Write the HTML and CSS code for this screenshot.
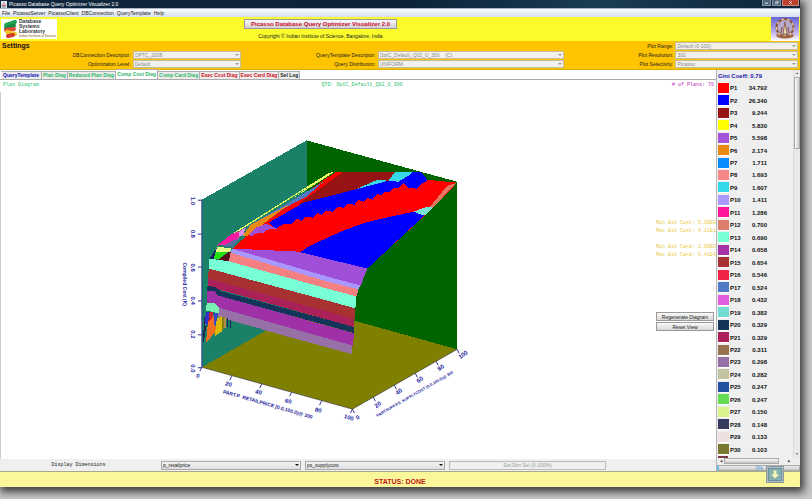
FILE: index.html
```
<!DOCTYPE html>
<html lang="en">
<head>
<meta charset="utf-8">
<title>Picasso Database Query Optimizer Visualizer 2.0</title>
<link rel="stylesheet" href="styles.css">
</head>
<body>
<div class="window">
  <header class="titlebar">
    <svg class="java" viewBox="0 0 6 7"><rect width="6" height="7" fill="#dfe6ee"/><path d="M3 1q-1 1 0 2M1 4h3v1H1zM4 4h1" stroke="#b33" stroke-width=".6" fill="none"/><path d="M1 6h4" stroke="#357" stroke-width=".6"/></svg>
    <span class="title">Picasso Database Query Optimizer Visualizer 2.0</span>
    <div class="controls">
      <button class="ctl" aria-label="Minimize"><svg viewBox="0 0 10 6"><path d="M3 4h4" stroke="#fff" stroke-width="1.3"/></svg></button>
      <button class="ctl" aria-label="Restore"><svg viewBox="0 0 10 6"><path d="M3.500 2.500h3v2h-3zM5 1.500h2.500v2" stroke="#fff" stroke-width=".8" fill="none"/></svg></button>
      <button class="ctl close" aria-label="Close"><svg viewBox="0 0 10 6"><path d="M3.500 1.500l3 3M6.500 1.500l-3 3" stroke="#fff" stroke-width="1"/></svg></button>
    </div>
  </header>
  <nav class="menu">
    <a href="#">File</a><a href="#">PicassoServer</a><a href="#">PicassoClient</a><a href="#">DBConnection</a><a href="#">QueryTemplate</a><a href="#">Help</a>
  </nav>
  <section class="banner">
    <div class="lab">
      <svg viewBox="0 0 16 20"><g stroke-width="4" stroke-linecap="round" fill="none"><path d="M4 6L13 3" stroke="#23a455"/><path d="M4 9L12 6.500" stroke="#158a42"/><path d="M4 11L12 10" stroke="#e04a3a"/><path d="M5 13L13 15" stroke="#f0c820"/><path d="M6 17L11 16" stroke="#d8372d"/></g></svg>
      <p>Database<br>Systems<br>Laboratory<small>Indian Institute of Science</small></p>
    </div>
    <div class="product">
      <button class="product-name">Picasso Database Query Optimizer Visualizer 2.0</button>
      <p>Copyright © Indian Institute of Science, Bangalore, India</p>
    </div>
    <svg class="crest" viewBox="0 0 28 24" preserveAspectRatio="none"><defs><linearGradient id="sky" x2="0" y2="1"><stop stop-color="#6865d8"/><stop offset=".6" stop-color="#b9a8e8"/><stop offset="1" stop-color="#fff"/></linearGradient></defs><rect width="28" height="24" fill="url(#sky)"/><circle cx="14" cy="10.500" r="8.500" fill="#b8aace" stroke="#80503a" stroke-width="2"/><circle cx="14" cy="10.500" r="8.500" fill="none" stroke="#e8c8a0" stroke-width="1.300" stroke-dasharray="3 3"/><path d="M12 17L14 5l2 12z" fill="#f0ddb0" stroke="#805038" stroke-width=".8"/><path d="M10 16l1-6M18 16l-1-6" stroke="#805038"/><path d="M5 17q9 4 18 0l-1 3q-8 3-16 0z" fill="#a0683c"/></svg>
  </section>
  <section class="settings">
    <h2>Settings</h2>
    <label class="l1 r2" for="db">DBConnection Descriptor:</label><span class="combo s1 r2"><select id="db" disabled><option>OPTC_2008</option></select></span>
    <label class="l1 r3" for="opt">Optimization Level:</label><span class="combo s1 r3"><select id="opt" disabled><option>Default</option></select></span>
    <label class="l2 r2" for="qt">QueryTemplate Descriptor:</label><span class="combo s2 r2"><select id="qt" disabled><option>OptC_Default_Q02_U_300 &nbsp;&nbsp; (C)</option></select></span>
    <label class="l2 r3" for="qd">Query Distribution:</label><span class="combo s2 r3"><select id="qd" disabled><option>UNIFORM</option></select></span>
    <label class="l3 r1" for="pr">Plot Range:</label><span class="combo s3 r1"><select id="pr" disabled><option>Default (0-100)</option></select></span>
    <label class="l3 r2" for="res">Plot Resolution:</label><span class="combo s3 r2"><select id="res" disabled><option>300</option></select></span>
    <label class="l3 r3" for="sel">Plot Selectivity:</label><span class="combo s3 r3"><select id="sel" disabled><option>Picasso</option></select></span>
  </section>
  <main class="work">
    <section class="left">
      <div class="tabs" role="tablist">
        <button role="tab" class="blue">QueryTemplate</button><button role="tab" class="green">Plan Diag</button><button role="tab" class="green">Reduced Plan Diag</button><button role="tab" class="green active" aria-selected="true">Comp Cost Diag</button><button role="tab" class="green">Comp Card Diag</button><button role="tab" class="red">Exec Cost Diag</button><button role="tab" class="red">Exec Card Diag</button><button role="tab">Sel Log</button>
      </div>
      <div class="plot-head"><span>Plan Diagram</span><span class="mid">QTD: OptC_Default_Q02_U_300</span><span class="plans"># of Plans: 76</span></div>
      <div class="plot">
        <svg class="diagram" viewBox="0 92 656 368" role="img" aria-label="Compiled cost diagram">
          <g shape-rendering="crispEdges">
          <path fill="#1b8068" d="M201 200L306 140.500V308L201 368z"/>
          <path fill="#006400" d="M306 140.500L457 182V350L306 308z"/>
          <path fill="#808000" d="M201 368L306 308L457 350L352 410z"/>
          <path fill="#f00" d="M232 249L246 236L325 179L336 172H418L427 180L457 183L432 209L367 269L297 254z"/>
          <path fill="#971414" d="M297 205L343 172H395L388 181L377 180L350 192L310 202z"/>
          <path fill="#34d8e8" d="M350 192L377 180L388 181L395 172H418L410 178L398 183z"/>
          <path fill="#00f" d="M268 223L303 203L350 191L388 181L398 182L408 176L413 172H420L426 178L427 181L421 184L417 189L408 188L403 183L398 188L393 188L390 192L384 192L381 196L377 194L372 200L367 198L363 202L358 200L354 205L348 204L343 208L337 207L332 212L326 211L321 215L317 213L312 218L306 217L301 221L296 219L291 224L284 224L275 229z"/>
          <path fill="#00f" d="M297 254L310 246L325 239L345 230L365 223L390 217L414 212L425 215L367 269z"/>
          <path fill="#e37862" d="M457 183L447 186L429 208H433L444 196z"/>
          <path fill="#78e0d5" d="M413 212L427 207L433 208L424 216z"/>
          <path fill="#a050d8" d="M231 249L297 252L367 269L363 279L360 287L330 279z"/>
          <path fill="#e8889a" d="M230 250L240 252V260L230 257z"/>
          <path fill="#a898ff" d="M231 249L330 278L360 286L358 290L330 283L230 255z"/>
          <path fill="#f48082" d="M229 253L330 283L358 290L356 297L330 290L228 262z"/>
          <path fill="#78ffd5" d="M208 259L229 262L330 290L356 297L355 309L330 302L208 269z"/>
          <path fill="#a83232" d="M208 269L330 302L355 309L354 321L330 314L207 280z"/>
          <path fill="#aa215a" d="M207 279L330 313L354 320V328L330 321L207 287z"/>
          <path fill="#15345a" d="M207 286L215 288L221 292L330 321L354 328V334L330 327L217 296L214 292L206 291z"/>
          <path fill="#a030a8" d="M206 291L214 292L217 296L354 334L352 347L330 340L218 310L206 304z"/>
          <path fill="#9770a8" d="M217 308L330 340L352 346V355L330 349L217 318z"/>
          <path fill="#1b8068" d="M218 318L262 330L234 349L201 367L204 345z"/>
          <path fill="#78f0b0" d="M206 303L214 304L218 308V314L205 311z"/>
          <path fill="#3030c8" d="M205 312L209 313L207 326L204 325z"/><path fill="#d82030" d="M209 312L212 313L211 325H207z"/>
          <path fill="#f47020" d="M207 324L214 315L215 332L205 344z"/><path fill="#3848c8" d="M213 314L217 314L215 326H213z"/>
          <path fill="#d8b800" d="M216 319L221 317V332L214 337z"/><path fill="#80801c" d="M221 318H225V326L221 332z"/><path fill="#202060" d="M226 319H227V328H226zM229 321H230V329H229z"/>
          <path fill="#b98b48" d="M223 319H225V329H223z"/><path fill="#90e838" d="M203 325H205L203 343H202z"/><path fill="#1f2a50" d="M204 315L205 330L202 347L203 323z"/>
          <path fill="#e840a0" d="M216 246L230 235L242 229L247 226L238 239L227 245z"/>
          <path fill="#fa18a0" d="M216 246L230 235L240 233L235 240L226 244z"/>
          <path fill="#e090e8" d="M238 233L245 227L243 235L239 237z"/>
          <path fill="#507bc4" d="M244 229L306 197L323 182L286 204L250 225z"/>
          <path fill="#e98812" d="M242 236L250 225L290 204L276 214L253 232L247 236z"/>
          <path fill="#a050d8" d="M248 235L255 228L266 224L272 227L277 229L267 230L263 233L255 234L251 237z"/>
          <path fill="#e8ff60" d="M230 235L327 174L335 171L325 178L245 228z"/>
          <path fill="#20846b" d="M234 234L310 186L286 203L245 228z"/>
          <path fill="#506ea0" d="M222 247L232 241L240 238L232 248z"/>
          <path fill="#dfff80" d="M216 247L231 249L229 253L215 252z"/>
          <path fill="#25e010" d="M215 252L227 253L222 256L219 260L213 259z"/>
          <path fill="#5a1018" d="M227 253L230 252L228 262L218 260z"/>
          <path fill="#182060" d="M216 248L213 259H209z"/>
          </g>
          <g fill="none" stroke="#30308c" stroke-width="1"><path d="M201 200V368M197 200.500H201M197 234.500H201M197 267.500H201M197 301.500H201M197 335.500H201M197 368.500H201"/><path d="M201 368L352 410L457 350" stroke="#505050" stroke-width=".8"/><path d="M201 368L199 372M231 377L229 381M261 385L259 389M291 393L289 397M321 402L319 406M352 410L350 414M352 410L354 414M373 398L375 402M394 386L396 390M415 374L417 378M436 362L438 366M457 350L459 354"/></g>
          <g class="tick">
            <text transform="translate(190 197) rotate(90)">1.0</text><text transform="translate(190 230) rotate(90)">0.8</text><text transform="translate(190 264) rotate(90)">0.6</text><text transform="translate(190 297) rotate(90)">0.4</text><text transform="translate(190 331) rotate(90)">0.2</text><text transform="translate(190 365) rotate(90)">0.0</text>
            <text transform="translate(195 378) rotate(16)">0</text><text transform="translate(224 386) rotate(16)">20</text><text transform="translate(254 394) rotate(16)">40</text><text transform="translate(284 403) rotate(16)">60</text><text transform="translate(314 412) rotate(16)">80</text><text transform="translate(343 419) rotate(16)">100</text>
            <text transform="translate(357 421) rotate(-35)">0</text><text transform="translate(376 409) rotate(-35)">20</text><text transform="translate(397 396) rotate(-35)">40</text><text transform="translate(418 384) rotate(-35)">60</text><text transform="translate(439 372) rotate(-35)">80</text><text transform="translate(460 360) rotate(-35)">100</text>
          </g>
          <g class="axis">
            <text transform="translate(182 263) rotate(90)">Compiled Cost (K)</text>
            <text transform="translate(222 394) rotate(16)">PART.P_RETAILPRICE [0.0,100.0)@ 300</text>
            <text class="small" transform="translate(377 418) rotate(-30)">PARTSUPP.PS_SUPPLYCOST [0.0,100.0)@ 300</text>
          </g>
        </svg>
        <aside class="side">
          <p>Min Est Cost: 5.30E0</p><p>Max Est Cost: 4.11E1</p><p class="card">Min Est Card: 1.00E0</p><p>Max Est Card: 6.41E4</p>
          <div class="actions"><button>Regenerate Diagram</button><button>Reset View</button></div>
        </aside>
      </div>
      <div class="dims">
        <label for="dx">Display Dimensions</label>
        <span class="combo live"><select id="dx"><option>p_retailprice</option></select></span>
        <span class="combo live"><select id="dy" aria-label="Second dimension"><option>ps_supplycost</option></select></span>
        <button disabled>Set Dim Sel (0-100%)</button><span></span>
      </div>
    </section>
    <aside class="legend">
      <div class="legend-body">
        <div class="plans-list">
          <h3>Gini Coeff: 0.79</h3>
          <table><tbody>
          <tr><td><i class="p1"></i></td><th>P1</th><td>34.792</td></tr>
          <tr><td><i class="p2"></i></td><th>P2</th><td>26.340</td></tr>
          <tr><td><i class="p3"></i></td><th>P3</th><td>9.244</td></tr>
          <tr><td><i class="p4"></i></td><th>P4</th><td>5.830</td></tr>
          <tr><td><i class="p5"></i></td><th>P5</th><td>5.598</td></tr>
          <tr><td><i class="p6"></i></td><th>P6</th><td>2.174</td></tr>
          <tr><td><i class="p7"></i></td><th>P7</th><td>1.711</td></tr>
          <tr><td><i class="p8"></i></td><th>P8</th><td>1.693</td></tr>
          <tr><td><i class="p9"></i></td><th>P9</th><td>1.607</td></tr>
          <tr><td><i class="p10"></i></td><th>P10</th><td>1.411</td></tr>
          <tr><td><i class="p11"></i></td><th>P11</th><td>1.286</td></tr>
          <tr><td><i class="p12"></i></td><th>P12</th><td>0.700</td></tr>
          <tr><td><i class="p13"></i></td><th>P13</th><td>0.690</td></tr>
          <tr><td><i class="p14"></i></td><th>P14</th><td>0.658</td></tr>
          <tr><td><i class="p15"></i></td><th>P15</th><td>0.654</td></tr>
          <tr><td><i class="p16"></i></td><th>P16</th><td>0.546</td></tr>
          <tr><td><i class="p17"></i></td><th>P17</th><td>0.524</td></tr>
          <tr><td><i class="p18"></i></td><th>P18</th><td>0.432</td></tr>
          <tr><td><i class="p19"></i></td><th>P19</th><td>0.382</td></tr>
          <tr><td><i class="p20"></i></td><th>P20</th><td>0.329</td></tr>
          <tr><td><i class="p21"></i></td><th>P21</th><td>0.329</td></tr>
          <tr><td><i class="p22"></i></td><th>P22</th><td>0.311</td></tr>
          <tr><td><i class="p23"></i></td><th>P23</th><td>0.298</td></tr>
          <tr><td><i class="p24"></i></td><th>P24</th><td>0.282</td></tr>
          <tr><td><i class="p25"></i></td><th>P25</th><td>0.247</td></tr>
          <tr><td><i class="p26"></i></td><th>P26</th><td>0.247</td></tr>
          <tr><td><i class="p27"></i></td><th>P27</th><td>0.150</td></tr>
          <tr><td><i class="p28"></i></td><th>P28</th><td>0.148</td></tr>
          <tr><td><i class="p29"></i></td><th>P29</th><td>0.133</td></tr>
          <tr><td><i class="p30"></i></td><th>P30</th><td>0.103</td></tr>
          </tbody></table>
          <div class="next"></div>
        </div>
        <div class="vscroll"><b>▲</b><span class="thumb"></span><b>▼</b></div>
      </div>
      <div class="hscroll"><b>◀</b><span class="thumb"></span><b>▶</b><span></span></div>
      <div class="progress">0%</div>
    </aside>
  </main>
  <footer class="status">STATUS: DONE
    <svg class="badge" viewBox="0 0 18 17"><rect x=".5" y=".5" width="17" height="16" fill="#fdfde8" stroke="#909a98"/><rect x="2" y="2" width="14" height="13" fill="#86b0ad" stroke="#54799a"/><path d="M7.500 4.500h3v4h2.500L9 12.500L5 8.500h2.500z" fill="#f6f6b8"/></svg>
  </footer>
</div>
</body>
</html>
```
FILE: styles.css
```
* { box-sizing: border-box; margin: 0; padding: 0; }
body {
  height: 100vh;
  padding: 0 12px 12px 0;
  overflow: hidden;
  background: #c9c9c9;
  font: 5px/6px "Liberation Sans", Arial, sans-serif;
  color: #222;
}
button, select { font: inherit; color: inherit; border: 0; border-radius: 0; background: none; }
a { color: inherit; text-decoration: none; }
svg { display: block; }
.window {
  display: flex;
  flex-direction: column;
  height: 100%;
  box-shadow: 2px 3px 8px 2px #3c3c3c;
}

.titlebar {
  display: flex;
  align-items: center;
  height: 8px;
  flex: none;
  padding: 0 1px 0 1px;
  background: linear-gradient(90deg, #10263d, #0b2238 50%, #1a3c55 75%, #0d2336);
  color: #fff;
}
.java { width: 6px; height: 7px; margin-right: 2px; }
.controls { display: flex; align-self: flex-start; gap: 1px; margin-left: auto; }
.ctl { width: 9px; height: 6px; background: #53677a; border: 1px solid #8797a5; border-top: 0; }
.ctl svg { width: 100%; height: 100%; }
.ctl.close { width: 17px; background: #bd3f2d; border-color: #cf8a80; }

.menu {
  display: flex;
  align-items: center;
  gap: 3px;
  height: 9px;
  flex: none;
  padding-left: 2px;
  border-top: 1px solid #a9b6c6;
  background: linear-gradient(#fbfcfe, #d5ddef);
}

.banner {
  display: grid;
  grid-template-columns: 243fr 153fr 402fr;
  align-items: center;
  height: 24px;
  flex: none;
  padding: 0 1px;
  background: #fbfa2b;
}
.lab { display: flex; width: 56px; height: 20px; background: #fff; font-weight: bold; color: #333; }
.lab svg { width: 18px; height: 20px; flex: none; }
.lab p { line-height: 5px; white-space: nowrap; }
.lab small { display: block; font-size: 3px; line-height: 4px; color: #b08050; }
.product { text-align: center; }
.product-name {
  display: block;
  height: 10px;
  width: 100%;
  margin-bottom: 4px;
  border: 1px solid #9a98a0;
  background: linear-gradient(#fbfafb, #d2cdd4);
  color: #c8102a;
  font-weight: bold;
  font-size: 6px;
  line-height: 8px;
  white-space: nowrap;
}
.crest { width: 28px; height: 24px; justify-self: end; }

.settings {
  display: grid;
  grid-template-columns: 131fr 109fr 133fr 187fr 108fr 123fr;
  grid-template-rows: repeat(3, 8px);
  gap: 1px 2px;
  height: 29px;
  flex: none;
  padding: 1px 2px 1px 0;
  border-bottom: 1px solid #d8ac00;
  background: #ffc400;
  align-items: center;
}
.settings h2 { grid-area: 1 / 1; padding-left: 2px; font-size: 7px; line-height: 8px; color: #111; }
.settings label { text-align: right; }
.l1 { grid-column: 1; } .s1 { grid-column: 2; }
.l2 { grid-column: 3; } .s2 { grid-column: 4; }
.l3 { grid-column: 5; } .s3 { grid-column: 6; }
.r1 { grid-row: 1; } .r2 { grid-row: 2; } .r3 { grid-row: 3; }
.combo { position: relative; display: block; height: 8px; }
.combo select {
  display: block;
  width: 100%;
  height: 100%;
  appearance: none;
  padding-left: 1px;
  border: 1px solid #c3bda0;
  background: #f3f1ea;
  color: #8a8a8a;
  line-height: 6px;
  opacity: 1;
}
.combo::after {
  content: "";
  position: absolute;
  right: 2px;
  top: 3px;
  border: 2px solid transparent;
  border-top-color: #999;
  border-bottom: 0;
}

.work { display: flex; flex: 1; min-height: 0; background: #fff; border-bottom: 1px solid #aaa78c; }
.left { display: flex; flex-direction: column; flex: 1; min-width: 0; }
.tabs { display: flex; align-items: flex-end; height: 10px; flex: none; padding-left: 1px; border-bottom: 1px solid #aaa; }
.tabs button {
  height: 8px;
  padding: 0 1px;
  border: 1px solid #b0b0b0;
  border-width: 1px 1px 0 0;
  background: #ececec;
  font-weight: bold;
  line-height: 7px;
  white-space: nowrap;
}
.tabs .active { height: 10px; background: #fff; }
.tabs .blue { color: #1414b4; padding: 0 2px; }
.tabs .green { color: #2cb868; }
.tabs .red { color: #d01020; }

.plot-head {
  display: grid;
  grid-template-columns: 1fr auto 1fr;
  height: 12px;
  flex: none;
  padding: 2px 2px 0 3px;
  font-family: "Liberation Mono", monospace;
  color: #2fbf72;
}
.plot-head .mid { margin-left: 7px; }
.plans { text-align: right; color: #b828b8; }
.plot { display: flex; flex: 1; min-height: 0; border-left: 1px solid #ccc; }
.diagram { flex: 1; min-width: 0; height: 100%; }
.tick, .axis { fill: #1c1c9c; font-weight: bold; }
.tick { font-size: 6px; }
.axis { font-size: 5px; }
.axis .small { font-size: 4px; }
.side {
  width: 60px;
  flex: none;
  padding-top: 127px;
  overflow: hidden;
  font-family: "Liberation Mono", monospace;
  color: #e8c63c;
  white-space: nowrap;
}
.side p { line-height: 8px; }
.side .card { margin-top: 8px; }
.actions { display: grid; gap: 1px; margin-top: 53px; padding-right: 2px; }
.actions button {
  height: 9px;
  border: 1px solid #999;
  background: linear-gradient(#fafafa, #d8d8d8);
  color: #222;
  font-family: "Liberation Sans", Arial, sans-serif;
}

.dims {
  display: grid;
  grid-template-columns: 157fr 140fr 140fr 157fr 106fr;
  gap: 4px;
  align-items: center;
  height: 12px;
  flex: none;
  background: #efefef;
}
.dims label { font-family: "Liberation Mono", monospace; text-align: center; }
.dims .combo { height: 9px; }
.dims select { border-color: #aaa; background: linear-gradient(#f4f4f4, #dedede); color: #222; }
.live::after { border-top-color: #111; }
.dims button { height: 9px; border: 1px solid #bbb; color: #999; background: #f0f0f0; }

.legend { display: flex; flex-direction: column; width: 84px; flex: none; border-left: 1px solid #b4b4b4; background: #efefef; }
.legend-body { display: flex; flex: 1; min-height: 0; }
.plans-list { display: flex; flex-direction: column; flex: 1; min-width: 0; }
.legend h3 { height: 12px; flex: none; padding-left: 1px; font-size: 6px; line-height: 13px; color: #1818a8; white-space: nowrap; }
.legend table { display: flex; flex: 1; min-height: 0; font-size: 6px; line-height: 8px; color: #111; }
.legend tbody { display: grid; flex: 1; grid-auto-rows: 1fr; }
.legend tr { display: grid; grid-template-columns: 13px 14px 23px; align-items: center; min-height: 0; }
.legend th { text-align: left; }
.legend td { text-align: right; font-weight: bold; }
.legend i { display: block; width: 11px; height: 11px; margin-left: 1px; border: 1px solid #fff; border-width: 0 0 1px; }
.next { width: 10px; height: 2px; margin-left: 1px; background: #7c3c48; }
.vscroll { display: flex; flex-direction: column; align-items: center; width: 7px; background: #e9e9e9; border-left: 1px solid #ddd; }
.vscroll b, .hscroll b { font-size: 3px; line-height: 7px; color: #333; font-weight: normal; }
.vscroll .thumb { width: 6px; height: 72px; border: 1px solid #aaa; background: linear-gradient(90deg, #fafafa, #ccc); }
.vscroll b:last-child { margin-top: auto; }
.hscroll { display: grid; grid-template-columns: 7px 55px 20px 1fr; height: 7px; flex: none; text-align: center; background: #eee; }
.hscroll .thumb { height: 6px; border: 1px solid #aaa; background: linear-gradient(#fafafa, #c6c6c6); }
.progress { height: 6px; flex: none; border: 1px solid #aaa; border-left: 2px solid #70b8e8; background: linear-gradient(#eee, #c8c8c8); text-align: center; line-height: 4px; color: #3c98e0; }

.status {
  position: relative;
  height: 15px;
  flex: none;
  background: #faf79a;
  color: #c01818;
  font-size: 7px;
  font-weight: bold;
  line-height: 20px;
  text-align: center;
}
.badge { position: absolute; right: 16px; top: -6px; width: 18px; height: 17px; }

.p1 { background: #f00; } .p2 { background: #00f; } .p3 { background: #971414; }
.p4 { background: #ff0; } .p5 { background: #a454d8; } .p6 { background: #e98812; }
.p7 { background: #0a8cff; } .p8 { background: #f58888; } .p9 { background: #34d8e8; }
.p10 { background: #a898ff; } .p11 { background: #ff149c; } .p12 { background: #db7f6c; }
.p13 { background: #78ffd5; } .p14 { background: #a631a8; } .p15 { background: #a83232; }
.p16 { background: #f02448; } .p17 { background: #507bc4; } .p18 { background: #e25ce0; }
.p19 { background: #74dbd2; } .p20 { background: #15345a; } .p21 { background: #aa215a; }
.p22 { background: #987350; } .p23 { background: #9770a8; } .p24 { background: #c3c3a0; }
.p25 { background: #2450a0; } .p26 { background: #66dc54; } .p27 { background: #d9f28b; }
.p28 { background: #363a5c; } .p29 { background: #eedfe0; } .p30 { background: #787830; }
```
